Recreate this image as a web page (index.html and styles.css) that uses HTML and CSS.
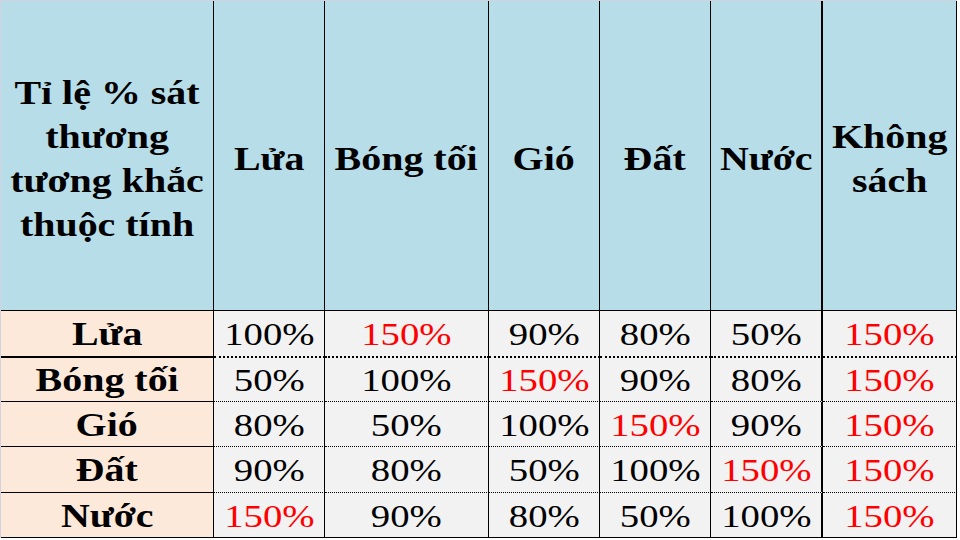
FILE: index.html
```html
<!DOCTYPE html>
<html lang="vi">
<head>
  <meta charset="UTF-8" />
  <meta name="viewport" content="width=device-width, initial-scale=1.0" />
  <title>Tỉ lệ % sát thương tương khắc thuộc tính</title>
  <link rel="stylesheet" href="styles.css">
</head>
<body>

<table class="matrix">
  <colgroup>
    <col class="col-label">
    <col class="col-fire">
    <col class="col-shadow">
    <col class="col-wind">
    <col class="col-earth">
    <col class="col-water">
    <col class="col-none">
  </colgroup>
  <thead>
    <tr>
      <th class="corner"><span class="txt">Tỉ lệ % sát<br>thương<br>tương khắc<br>thuộc tính</span></th>
      <th><span class="txt">Lửa</span></th>
      <th><span class="txt">Bóng tối</span></th>
      <th><span class="txt">Gió</span></th>
      <th><span class="txt">Đất</span></th>
      <th class="split"><span class="txt">Nước</span></th>
      <th><span class="txt">Không<br>sách</span></th>
    </tr>
  </thead>
  <tbody>
    <tr class="first">
      <th scope="row"><span class="txt">Lửa</span></th>
      <td><span class="txt">100%</span></td>
      <td class="hi"><span class="txt">150%</span></td>
      <td><span class="txt">90%</span></td>
      <td><span class="txt">80%</span></td>
      <td class="split"><span class="txt">50%</span></td>
      <td class="hi"><span class="txt">150%</span></td>
    </tr>
    <tr class="r2">
      <th scope="row"><span class="txt">Bóng tối</span></th>
      <td><span class="txt">50%</span></td>
      <td><span class="txt">100%</span></td>
      <td class="hi"><span class="txt">150%</span></td>
      <td><span class="txt">90%</span></td>
      <td class="split"><span class="txt">80%</span></td>
      <td class="hi"><span class="txt">150%</span></td>
    </tr>
    <tr class="r3">
      <th scope="row"><span class="txt">Gió</span></th>
      <td><span class="txt">80%</span></td>
      <td><span class="txt">50%</span></td>
      <td><span class="txt">100%</span></td>
      <td class="hi"><span class="txt">150%</span></td>
      <td class="split"><span class="txt">90%</span></td>
      <td class="hi"><span class="txt">150%</span></td>
    </tr>
    <tr class="r4">
      <th scope="row"><span class="txt">Đất</span></th>
      <td><span class="txt">90%</span></td>
      <td><span class="txt">80%</span></td>
      <td><span class="txt">50%</span></td>
      <td><span class="txt">100%</span></td>
      <td class="split hi"><span class="txt">150%</span></td>
      <td class="hi"><span class="txt">150%</span></td>
    </tr>
    <tr class="r5 last">
      <th scope="row"><span class="txt">Nước</span></th>
      <td class="hi"><span class="txt">150%</span></td>
      <td><span class="txt">90%</span></td>
      <td><span class="txt">80%</span></td>
      <td><span class="txt">50%</span></td>
      <td class="split"><span class="txt">100%</span></td>
      <td class="hi"><span class="txt">150%</span></td>
    </tr>
  </tbody>
</table>

</body>
</html>
```

FILE: styles.css
```css
body {
  margin: 0;
  background: #ffffff;
}
.matrix {
  border-collapse: separate;
  border-spacing: 0;
  table-layout: fixed;
  width: 957px;
  border-top: 1px solid #d3d3df;
  border-left: 1px solid #d3d3df;
  font-family: "Liberation Serif", "Times New Roman", serif;
  color: #000;
}
.col-label { width: 213px; }
.col-fire { width: 111px; }
.col-shadow { width: 164px; }
.col-wind { width: 111px; }
.col-earth { width: 111px; }
.col-water { width: 112px; }
.col-none { width: 134px; }

th, td {
  padding: 0;
  text-align: center;
  vertical-align: middle;
  border-right: 1px solid #000;
  border-bottom: 1px solid #000;
  white-space: nowrap;
  overflow: hidden;
}
.txt {
  display: inline-block;
  position: relative;
  transform: scaleX(1.21);
}

thead th {
  background: #b7dde8;
  height: 309px;
  font-size: 33px;
  line-height: 44px;
  font-weight: bold;
}
thead th .txt {
  top: 3px;
}

tbody th {
  background: #fde9d9;
  font-size: 33px;
  font-weight: bold;
}
tbody td {
  background: #f2f2f2;
  font-family: "Liberation Serif", "Times New Roman", serif;
  font-size: 32px;
  font-weight: normal;
  border-bottom: 1px dotted #000;
}
tbody .txt {
  top: 1px;
}
.split {
  border-right-width: 2px;
}
tbody td.hi {
  color: #ff0000;
}

.first th { border-bottom-width: 2px; height: 45px; }
.first td { border-bottom-width: 2px; height: 45px; }
.r2 th, .r2 td { height: 43px; }
.r3 th, .r3 td { height: 44px; }
.r4 th, .r4 td { height: 45px; }
.r5 th, .r5 td { height: 44px; }
.last td { border-bottom-style: solid; }
```
